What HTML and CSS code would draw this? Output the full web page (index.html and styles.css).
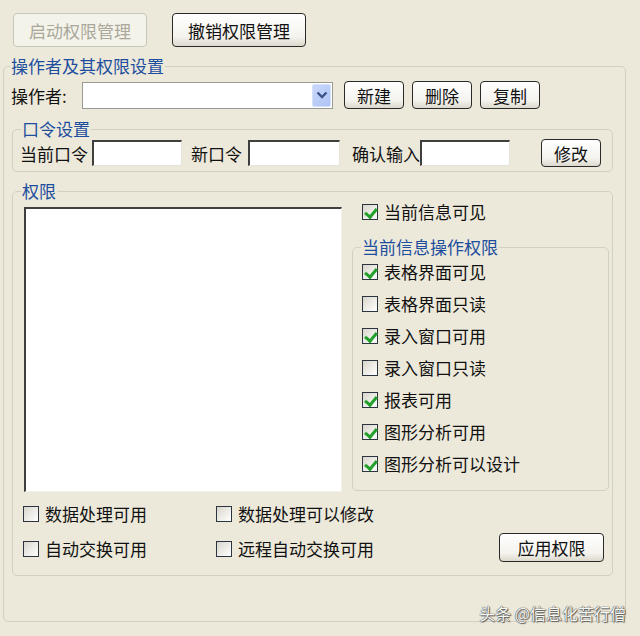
FILE: index.html
```html
<!DOCTYPE html>
<html>
<head>
    <meta charset="UTF-8">
    <link rel="stylesheet" href="styles.css">
</head>
<body>
    <div class="top-bar">
        <button class="btn btn-big" disabled>启动权限管理</button>
        <button class="btn btn-big">撤销权限管理</button>
    </div>

    <fieldset class="group main-group">
        <legend>操作者及其权限设置</legend>

        <div class="operator-row">
            <span class="operator-label">操作者:</span>
            <div class="combo">
                <span class="combo-arrow">
                    <svg width="12" height="9" viewBox="0 0 12 9"><polyline points="1.5,1.5 6,6 10.5,1.5" fill="none" stroke="#3d5287" stroke-width="2.4"/></svg>
                </span>
            </div>
            <div class="operator-btns">
                <button class="btn btn-small">新建</button>
                <button class="btn btn-small">删除</button>
                <button class="btn btn-small">复制</button>
            </div>
        </div>

        <fieldset class="group pwd-group">
            <legend>口令设置</legend>
            <div class="pwd-row">
                <span class="pwd-label">当前口令</span>
                <span class="textbox pwd-current"></span>
                <span class="pwd-label pwd-new-label">新口令</span>
                <span class="textbox pwd-new"></span>
                <span class="pwd-label pwd-confirm-label">确认输入</span>
                <span class="textbox pwd-confirm"></span>
                <button class="btn btn-small pwd-btn">修改</button>
            </div>
        </fieldset>

        <fieldset class="group perm-group">
            <legend>权限</legend>
            <div class="perm-top">
                <div class="listbox"></div>
                <div class="perm-side">
                    <div class="check-item visible-item"><span class="box checked"></span>当前信息可见</div>
                    <fieldset class="group op-group">
                        <legend>当前信息操作权限</legend>
                        <div class="op-list">
                            <div class="check-item"><span class="box checked"></span>表格界面可见</div>
                            <div class="check-item"><span class="box"></span>表格界面只读</div>
                            <div class="check-item"><span class="box checked"></span>录入窗口可用</div>
                            <div class="check-item"><span class="box"></span>录入窗口只读</div>
                            <div class="check-item"><span class="box checked"></span>报表可用</div>
                            <div class="check-item"><span class="box checked"></span>图形分析可用</div>
                            <div class="check-item"><span class="box checked"></span>图形分析可以设计</div>
                        </div>
                    </fieldset>
                </div>
            </div>
            <div class="perm-bottom">
                <div class="perm-grid">
                    <div class="check-item"><span class="box"></span>数据处理可用</div>
                    <div class="check-item"><span class="box"></span>数据处理可以修改</div>
                    <div class="check-item"><span class="box"></span>自动交换可用</div>
                    <div class="check-item"><span class="box"></span>远程自动交换可用</div>
                </div>
                <button class="btn apply-btn">应用权限</button>
            </div>
        </fieldset>

        <div class="watermark">头条 @信息化苦行僧</div>
    </fieldset>
</body>
</html>
```

FILE: styles.css
```css
* {
    box-sizing: border-box;
}

body {
    margin: 0;
    width: 640px;
    height: 636px;
    overflow: hidden;
    background: #ece9da;
    color: #111;
    font-family: "Noto Sans CJK SC", "Noto Sans", sans-serif;
    font-size: 17px;
}

/* buttons */
.btn {
    font-family: inherit;
    font-size: 17px;
    color: #111;
    padding: 0;
    border: 1px solid #2a2a2a;
    border-radius: 4px;
    background: linear-gradient(#ffffff, #f4f3ee 70%, #dcd8cc);
    line-height: 1;
}

.btn:disabled {
    color: #aaa89a;
    border-color: #c8c6b8;
    background: #f4f3ea;
}

.btn-big {
    width: 134px;
    height: 34px;
}

.btn-small {
    width: 60px;
    height: 28px;
}

.top-bar {
    display: flex;
    gap: 25px;
    padding: 13px 0 0 13px;
    margin-bottom: 9px;
}

/* group boxes */
.group {
    margin: 0;
    padding: 0;
    border: 1px solid #d2d0c2;
    border-radius: 5px;
    min-width: 0;
}

.group > legend {
    padding: 0 1px;
    line-height: 20px;
    color: #1d4e9e;
}

.main-group {
    position: relative;
    width: 623px;
    margin-left: 3px;
}

.main-group > legend {
    margin-left: 6px;
}

.operator-row {
    display: flex;
    align-items: center;
    height: 30px;
    margin-top: 4px;
    padding-left: 7px;
}

.operator-label {
    width: 71px;
}

.combo {
    width: 251px;
    height: 27px;
    border: 1px solid #9a9a94;
    background: #fff;
    display: flex;
    justify-content: flex-end;
    padding: 1px;
}

.combo-arrow {
    width: 19px;
    height: 100%;
    border-radius: 2px;
    border: 1px solid #d5e0fb;
    background: linear-gradient(135deg, #c9d8fc, #aec4f4);
    display: flex;
    align-items: center;
    justify-content: center;
}

.operator-btns {
    display: flex;
    gap: 8px;
    margin-left: 11px;
}

/* password group */
.pwd-group {
    margin: 9px 12px 0 8px;
}

.pwd-group > legend,
.perm-group > legend {
    margin-left: 8px;
}

.pwd-row {
    display: flex;
    align-items: center;
    height: 28px;
    padding-left: 7px;
    margin-bottom: 4px;
}

.textbox {
    height: 26px;
    background: #fff;
    border-top: 2px solid #3f3f3f;
    border-left: 2px solid #3f3f3f;
    border-right: 1px solid #e6e4da;
    border-bottom: 1px solid #e6e4da;
}

.pwd-current {
    width: 90px;
    margin-left: 4px;
}

.pwd-new-label {
    margin-left: 9px;
}

.pwd-new {
    width: 92px;
    margin-left: 6px;
}

.pwd-confirm-label {
    margin-left: 12px;
}

.pwd-confirm {
    width: 90px;
}

.pwd-btn {
    margin-left: 31px;
}

/* permission group */
.perm-group {
    margin: 9px 12px 45px 8px;
}

.perm-top {
    display: flex;
    gap: 10px;
    padding-top: 6px;
    padding-left: 11px;
}

.listbox {
    width: 318px;
    height: 285px;
    background: #fff;
    border-top: 2px solid #3f3f3f;
    border-left: 2px solid #3f3f3f;
    border-right: 1px solid #f2f1ea;
    border-bottom: 1px solid #f2f1ea;
}

.perm-side {
    flex: 1;
    margin-top: -6px;
    padding-right: 3px;
}

.check-item {
    display: flex;
    align-items: center;
    gap: 6px;
    height: 20px;
    line-height: 20px;
    white-space: nowrap;
}

.visible-item {
    padding-left: 10px;
    margin-top: 1px;
}

.box {
    width: 16px;
    height: 16px;
    border: 1px solid #2c3440;
    background: linear-gradient(135deg, #d8d6cc, #ffffff);
    flex: none;
    position: relative;
}

.box.checked::after {
    content: "";
    position: absolute;
    left: 4px;
    top: 1px;
    width: 5px;
    height: 9px;
    border-right: 3px solid #22a12a;
    border-bottom: 3px solid #22a12a;
    transform: rotate(40deg);
}

.op-group {
    margin-top: 15px;
}

.op-group > legend {
    margin-left: 8px;
}

.op-list {
    display: flex;
    flex-direction: column;
    gap: 12px;
    padding: 5px 0 16px 9px;
}

.perm-bottom {
    display: flex;
    align-items: flex-end;
    margin-top: 12px;
    padding: 0 8px 13px 10px;
}

.perm-grid {
    display: grid;
    grid-template-columns: 193px 200px;
    row-gap: 15px;
    margin-bottom: 3px;
}

.apply-btn {
    width: 105px;
    height: 29px;
    margin-left: auto;
}

.watermark {
    position: absolute;
    right: -1px;
    bottom: -3px;
    font-size: 16px;
    line-height: 22px;
    color: #f8f8f4;
    text-shadow: 0 0 1px #444, 0 0 1px #444, 1px 1px 1px #666;
}
```
